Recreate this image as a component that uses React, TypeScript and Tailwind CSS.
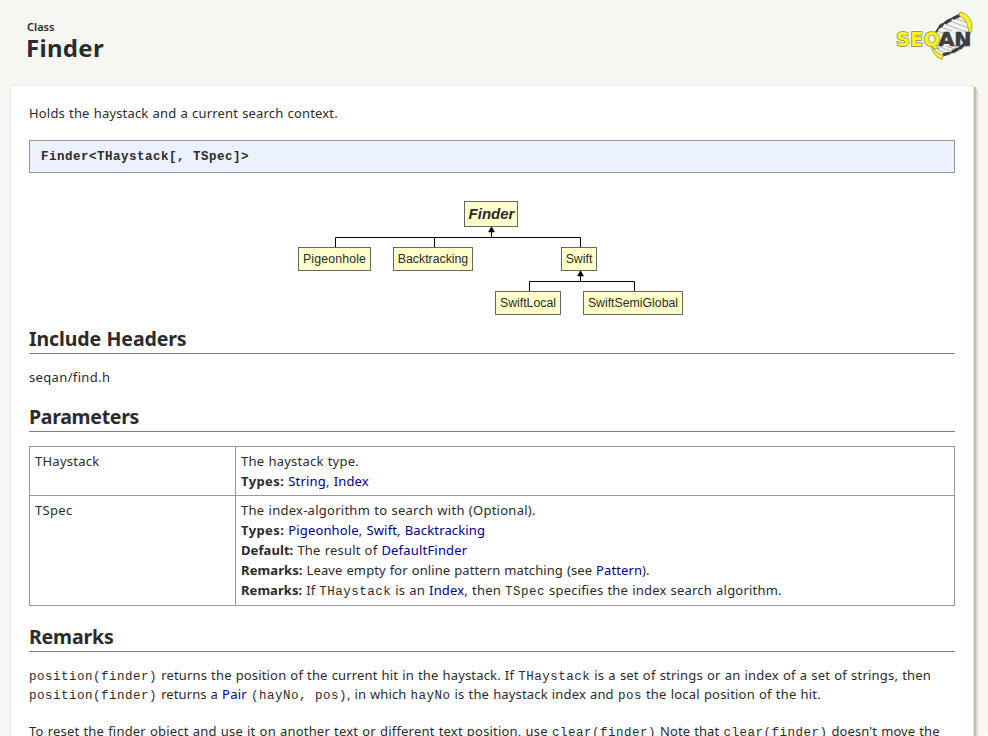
import type { ReactNode } from "react";

function Logo() {
  return (
    <svg width="90" height="60" viewBox="0 0 90 60">
      <path d="M43 33C46 22 56 13 69 10L80 17C82 29 72 46 54 50L45 44Z" fill="#f3f4f1" />
      <g stroke="#b4b4b2" strokeWidth="1">
        <path d="M60 16L79 23M55 19L79 28M51 22L62 26M47 26L56 29M64 13L78 18M50 42L66 48M56 41L70 46M63 41L73 44M48 45L60 50" />
      </g>
      <g fill="none" stroke="#423c40" strokeLinecap="round">
        <path d="M44 30C48 22 56 15 69 10.500" strokeWidth="1.800" />
        <path d="M56 17.500L60 15.200M64 13L69 10.800M50 21.500L52 20" strokeWidth="3.200" />
        <path d="M54 49.500C63 48 71 43 76 37" strokeWidth="1.800" />
        <path d="M54 49.500L58 48.500M63 46.500L67 44.500M70 43L74 39.500" strokeWidth="3.200" />
      </g>
      <path d="M70 7C76 8 81 13 82 20C82 25 81 28 79 31C79 23 77 14 69 10.500Z" fill="#fbf315" stroke="#85855a" strokeWidth=".7" />
      <path d="M41 40C44 45 48 49 53.500 50.500L52 54.500C46 52.500 42 47 41 40Z" fill="#fbf315" stroke="#85855a" strokeWidth=".7" />
      <g fontFamily="'DejaVu Sans', sans-serif" fontSize="20" fontWeight="700" letterSpacing="0" wordSpacing="0">
        <text x="6" y="40.500" textLength="44" lengthAdjust="spacingAndGlyphs" fill="#fbf315" stroke="#85855a" strokeWidth="1.400" paintOrder="stroke">SEQ</text>
        <text x="48.500" y="40.500" textLength="33" lengthAdjust="spacingAndGlyphs" fill="#423c40" stroke="#423c40" strokeWidth=".7">AN</text>
      </g>
    </svg>
  );
}

const NODES = [
  { label: "Finder", box: "left-[435px] top-[28px] h-[26px] w-[54px] pb-[2px] pl-px text-[15px] font-bold italic" },
  { label: "Pigeonhole", box: "left-[269px] top-[74px] h-[24px] w-[73px] text-[12.3px] tracking-[0.15px]" },
  { label: "Backtracking", box: "left-[364px] top-[74px] h-[24px] w-[80px] text-[12.3px]" },
  { label: "Swift", box: "left-[532px] top-[74px] h-[24px] w-[36px] text-[12.3px]" },
  { label: "SwiftLocal", box: "left-[466px] top-[118px] h-[24px] w-[66px] text-[12.3px]" },
  { label: "SwiftSemiGlobal", box: "left-[554px] top-[118px] h-[24px] w-[100px] text-[12.3px]" },
];

function Hierarchy() {
  return (
    <div className="relative h-[152px]">
      <svg className="absolute inset-0" width="926" height="152">
        <path d="M306.500 74V64.500H551.500V74M405.500 64V74M462.500 64V56M500.500 118V108.500H605.500V118M551.500 108V100" fill="none" stroke="#000" />
        <path d="M462.500 53.500L465.500 59H459.500ZM551.500 97.500L554.500 103H548.500Z" fill="#000" stroke="#000" strokeWidth=".5" />
      </svg>
      {NODES.map((n) => (
        <div key={n.label} className={`absolute flex items-center justify-center border border-[#666] bg-[#ffffcc] font-['Liberation_Sans',sans-serif] leading-none whitespace-nowrap ${n.box}`}>
          {n.label}
        </div>
      ))}
    </div>
  );
}

function Mono({ children }: { children: ReactNode }) {
  return <code className="font-['Liberation_Mono',monospace] text-[12.5px] leading-none tracking-[0.5px] [word-spacing:0]">{children}</code>;
}
function A({ children }: { children: ReactNode }) {
  return <a className="text-[#00008b]">{children}</a>;
}
function T({ t, children }: { t: string; children: ReactNode }) {
  return <span className={t}>{children}</span>;
}
function Heading({ className, children }: { className: string; children: ReactNode }) {
  return <h2 className={`h-[29px] border-b border-[#808080] text-[19.5px] leading-[28px] font-bold ${className}`}>{children}</h2>;
}

export default function App() {
  return (
    <div className="h-[736px] overflow-hidden rounded-b-[5px] bg-[#f6f7f2] pl-[10px] font-['Noto_Sans',sans-serif] text-[13px] leading-[20px] whitespace-nowrap text-[#2b2b2b] [word-spacing:0.5px]">
      <header className="flex h-[85px] justify-between pr-[8px] pl-[17px]">
        <div className="pt-[19px]">
          <div className="text-[11px] leading-[16px] font-semibold">Class</div>
          <h1 className="-ml-px text-[24px] leading-[26px] font-bold tracking-[0.3px]">Finder</h1>
        </div>
        <div className="pt-[5px]"><Logo /></div>
      </header>
      <main className="h-[700px] w-[964px] border border-[#ebebe8] bg-white px-[18px] pt-[17px] shadow-[2px_2px_0_#c5bda8,4px_4px_0_#ddd8cb]">
        <p className="tracking-[0.18px]">Holds the haystack and a current search context.</p>
        <div className="mt-[17px] flex h-[33px] items-center border border-[#999] bg-[#ebf1ff] pt-[2px] pl-[11px] font-bold">
          <Mono>Finder&lt;THaystack[, TSpec]&gt;</Mono>
        </div>
        <Hierarchy />
        <Heading className="tracking-[-0.1px]">Include Headers</Heading>
        <p className="mt-[13px] tracking-[0.35px]">seqan/find.h</p>
        <Heading className="mt-[16px] tracking-[-0.3px]">Parameters</Heading>
        <div className="mt-[14px] grid grid-cols-[206px_1fr] border border-[#999]">
          <div className="h-[49px] border-r border-b border-[#999] px-[5px] pt-[4px] tracking-[0.25px]">THaystack</div>
          <div className="border-b border-[#999] px-[5px] pt-[4px]">
            <div className="tracking-[0.23px]">The haystack type.</div>
            <div className="tracking-[0.17px]"><b className="tracking-[0.4px]">Types:</b> <A>String</A>, <A>Index</A></div>
          </div>
          <div className="h-[109px] border-r border-[#999] px-[5px] pt-[4px] tracking-[0.3px]">TSpec</div>
          <div className="px-[5px] pt-[4px]">
            <div className="tracking-[0.26px]">The index-algorithm to search with (Optional).</div>
            <div className="tracking-[0.15px]"><b className="tracking-[0.4px]">Types:</b> <A>Pigeonhole</A>, <A>Swift</A>, <A>Backtracking</A></div>
            <div className="tracking-[0.19px]"><b className="tracking-[0.08px]">Default:</b> The result of <A>DefaultFinder</A></div>
            <div className="tracking-[0.1px]"><b>Remarks:</b> Leave empty for online pattern matching (see <A>Pattern</A>).</div>
            <div className="tracking-[0.18px]"><b className="tracking-[0.05px]">Remarks:</b> <T t="tracking-normal">If</T> <Mono>THaystack</Mono> is an <A>Index</A>, then <Mono>TSpec</Mono> <T t="tracking-[0.2px]">specifies the index search algorithm.</T></div>
          </div>
        </div>
        <Heading className="mt-[17px] tracking-[-0.17px]">Remarks</Heading>
        <p className="mt-[14px] leading-[19px] tracking-[0.2px]">
          <Mono>position(finder)</Mono> <T t="tracking-[0.16px]">returns the position of the current hit in the haystack. If</T> <Mono>THaystack</Mono> is a set of strings or an index of a set of strings, then
          <br />
          <Mono>position(finder)</Mono> <T t="tracking-[0.1px]">returns a</T> <A>Pair</A> <Mono>(hayNo, pos)</Mono><T t="tracking-[0.1px]">, in which</T> <Mono>hayNo</Mono> <T t="tracking-[0.16px]">is the haystack index and</T> <Mono>pos</Mono> the local position of the hit.
        </p>
        <p className="mt-[18px] leading-[19px] tracking-[0.2px]">
          To reset the finder object and use it on another text or different text position, use <Mono>clear(finder)</Mono> <T t="tracking-[0.1px]">Note that</T> <Mono>clear(finder)</Mono> <T t="tracking-[0.1px]">doesn't move the</T>
        </p>
      </main>
    </div>
  );
}
